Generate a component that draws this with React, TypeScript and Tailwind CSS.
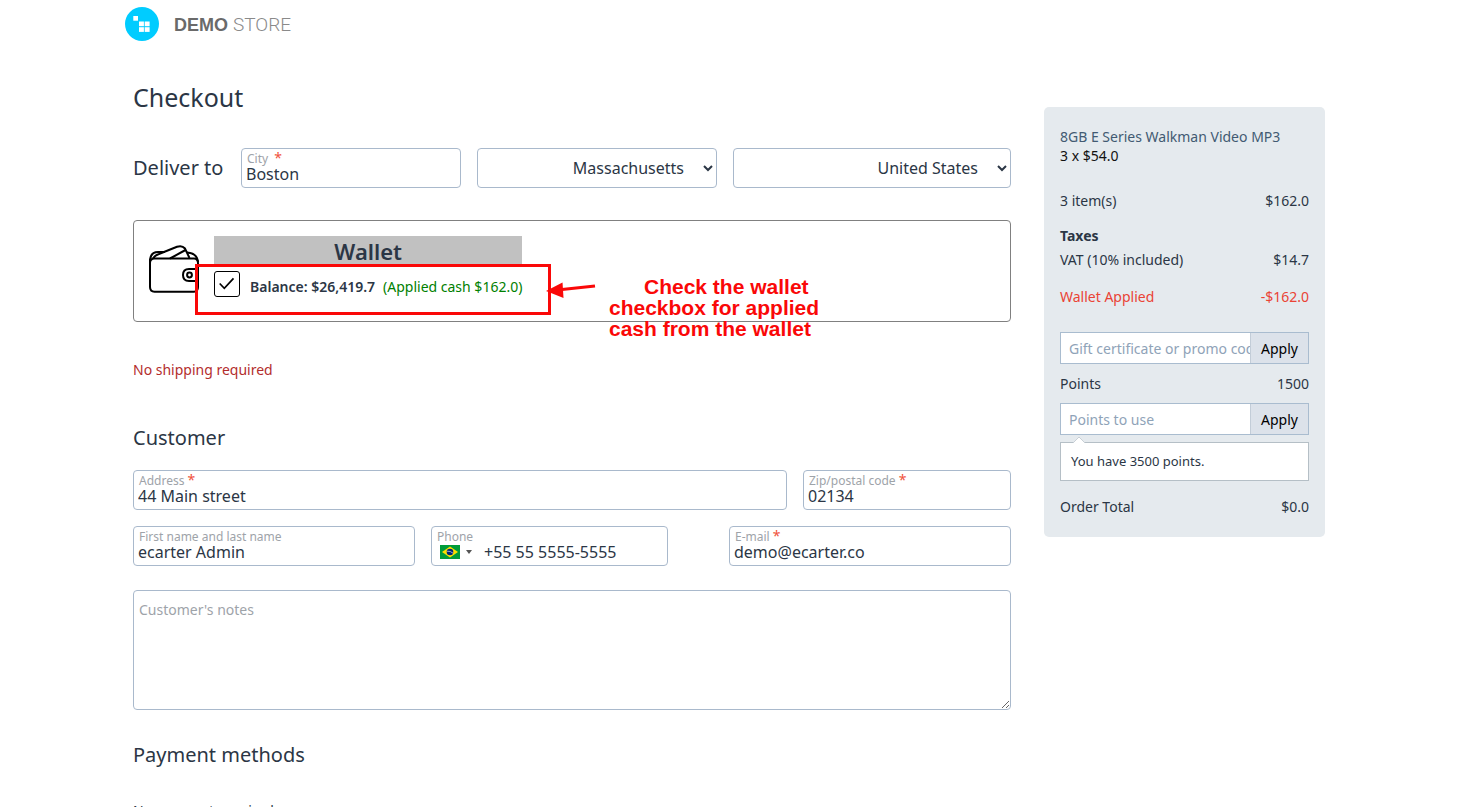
import { useId, useState } from "react";
import type { ReactNode } from "react";

const fieldBorder = "rounded border border-[#a9b9cc] bg-white";

function FloatingField({
  label,
  value,
  required = false,
  type = "text",
  className = "",
  wideMark = false,
}: {
  label: string;
  value: string;
  required?: boolean;
  type?: string;
  className?: string;
  wideMark?: boolean;
}) {
  const id = useId();
  return (
    <div className={`relative ${className}`}>
      <label htmlFor={id} className="absolute top-[3px] left-1.5 text-xs leading-4 text-[#9ea3a9]">
        {label}
        {required && (
          <span className={`text-sm leading-none text-[#f0523d] ${wideMark ? "ml-1.5" : "ml-[3px]"}`}>*</span>
        )}
      </label>
      <input
        id={id}
        type={type}
        defaultValue={value}
        className={`h-10 w-full pt-3 pl-1 text-base leading-5 outline-none ${fieldBorder}`}
      />
    </div>
  );
}

function SectionTitle({ children, className = "" }: { children: ReactNode; className?: string }) {
  return <h2 className={`text-xl leading-7 ${className}`}>{children}</h2>;
}

function SummaryRow({ label, value, className = "" }: { label: string; value: string; className?: string }) {
  return (
    <div className={`flex justify-between ${className}`}>
      <span>{label}</span>
      <span>{value}</span>
    </div>
  );
}

function CodeForm({ placeholder, className = "" }: { placeholder: string; className?: string }) {
  return (
    <form className={`flex h-8 border border-[#a9bccf] bg-white ${className}`} onSubmit={(e) => e.preventDefault()}>
      <input
        aria-label={placeholder}
        placeholder={placeholder}
        className="min-w-0 flex-1 pt-0.5 pl-2 text-sm outline-none placeholder:text-[#8fa3b8]"
      />
      <button type="submit" className="w-[58px] border-l border-[#c3cdd8] bg-[#dce2ea] pt-0.5 text-sm text-black">
        Apply
      </button>
    </form>
  );
}

function StoreLogo() {
  return (
    <svg viewBox="0 0 34 34" className="size-[34px]" aria-hidden="true">
      <circle cx="17" cy="17" r="17" fill="#00ccff" />
      <g fill="#fff">
        <rect x="8.300" y="9" width="4.700" height="4.700" />
        <rect x="14" y="14.500" width="4.900" height="4.700" />
        <rect x="19.700" y="14.500" width="4.900" height="4.700" />
        <rect x="14" y="20.200" width="4.900" height="4.700" />
        <rect x="19.700" y="20.200" width="4.900" height="4.700" />
      </g>
    </svg>
  );
}

function WalletIcon() {
  return (
    <svg viewBox="0 0 52 50" className="h-[50px] w-[52px]" fill="none" stroke="#000" strokeWidth="2" aria-hidden="true">
      <path d="M50 25V19Q50 14.500 46 14.500H6.500Q2 14.500 2 19V43Q2 47.700 6.500 47.700H46Q50 47.700 50 43V37" />
      <path d="M2 20V15.500Q3 8 10 8H17" />
      <path d="M5 14.500Q7 11 11 10L29 2.800Q34 1 37 4.500L41.500 14" />
      <path d="M22 14.500L37.500 6" />
      <path d="M39 8.500Q49 9 50 18" />
      <path d="M50 25H41Q35 25 35 31Q35 37 41 37H50Z" />
      <circle cx="41.500" cy="31" r="2.400" />
    </svg>
  );
}

function BrazilFlag() {
  return (
    <svg viewBox="0 0 20 14" className="h-3.5 w-5" aria-hidden="true">
      <rect width="20" height="14" fill="#009b3a" />
      <path d="M10 1.500L18 7L10 12.500L2 7Z" fill="#fedf00" />
      <circle cx="10" cy="7" r="3.300" fill="#002776" />
      <path d="M7 6.200Q10.500 5.800 13 8.200" stroke="#fff" strokeWidth=".6" fill="none" />
    </svg>
  );
}

function WalletCard() {
  const [checked, setChecked] = useState(true);
  return (
    <section className="relative mt-8 flex rounded border border-[#808080] py-[15px] pl-[14px]">
      <div className="mt-2">
        <WalletIcon />
      </div>
      <div className="ml-3.5 h-[70px]">
        <h3 className="bg-[#c1c1c1] text-center text-[22px] leading-[30px] font-semibold">Wallet</h3>
        <div className="mt-[5px] flex items-center">
          <span className="relative flex">
            <input
              id="wallet"
              type="checkbox"
              checked={checked}
              onChange={(e) => setChecked(e.target.checked)}
              className="size-[26px] appearance-none rounded-[3px] border border-black bg-white"
            />
            {checked && (
              <svg
                viewBox="0 0 26 26"
                className="pointer-events-none absolute inset-0 size-[26px]"
                fill="none"
                stroke="#000"
                strokeWidth="1.700"
                aria-hidden="true"
              >
                <path d="M5.700 12.500L10.300 17.300L19.500 7.300" />
              </svg>
            )}
          </span>
          <label htmlFor="wallet" className="mt-1.5 ml-2.5 text-sm leading-5">
            <span className="font-semibold">Balance: $26,419.7</span>
            <span className="ml-2 text-[#008000]">(Applied cash $162.0)</span>
          </label>
        </div>
      </div>
      <div className="pointer-events-none absolute top-[43px] left-[61px] h-[51px] w-[356px] border-3 border-[#fa0808]" />
      <svg viewBox="0 0 52 24" className="pointer-events-none absolute top-[58px] left-[412px] h-6 w-[52px]" aria-hidden="true">
        <path d="M49 7L16 10.500" stroke="#fa0808" strokeWidth="3" />
        <path d="M0 12L16.500 3.500L17.500 19Z" fill="#fa0808" />
      </svg>
      <p className="pointer-events-none absolute top-[55px] left-[475px] w-[230px] indent-[35px] font-['Liberation_Sans',Arial,sans-serif] text-[21px] leading-[21px] font-bold text-[#fa0808]">
        Check the wallet
        <br />
        <span className="block indent-0">checkbox for applied cash from the wallet</span>
      </p>
    </section>
  );
}

function OrderSummary() {
  return (
    <aside className="mt-[59px] w-[281px] shrink-0 self-start rounded-[5px] bg-[#e5eaee] px-4 py-5 text-sm leading-5">
      <div className="leading-[19px]">
        <a href="#product" className="block text-[#425a72]">
          8GB E Series Walkman Video MP3
        </a>
        <p className="text-[#111]">3 x $54.0</p>
      </div>
      <SummaryRow className="mt-[26px]" label="3 item(s)" value="$162.0" />
      <h3 className="mt-[15px] font-bold">Taxes</h3>
      <SummaryRow className="mt-1" label="VAT (10% included)" value="$14.7" />
      <SummaryRow className="mt-[17px] text-[#ea4335]" label="Wallet Applied" value="-$162.0" />
      <CodeForm className="mt-[25px]" placeholder="Gift certificate or promo code" />
      <SummaryRow className="mt-2.5" label="Points" value="1500" />
      <CodeForm className="mt-[9px]" placeholder="Points to use" />
      <div className="relative mt-[7px] border border-[#b5bfc6] bg-white px-2.5 py-[9px] text-[13px] leading-[19px]">
        <svg viewBox="0 0 14 8" className="absolute -top-[7px] left-[11px] h-2 w-3.5" aria-hidden="true">
          <path d="M0 8L7 1L14 8Z" fill="#fff" />
          <path d="M1 7L7 1L13 7" fill="none" stroke="#c9d0d6" />
        </svg>
        You have 3500 points.
      </div>
      <SummaryRow className="mt-4" label="Order Total" value="$0.0" />
    </aside>
  );
}

export default function App() {
  return (
    <div className="h-screen overflow-y-auto bg-white pr-3 font-['Noto_Sans',sans-serif] text-[#2b3645] [scrollbar-width:none]">
      <div className="mx-auto max-w-[1192px] pb-12">
        <header className="-ml-2 flex h-12 items-center">
          <a href="#home" className="flex items-center gap-[15px]">
            <StoreLogo />
            <span className="flex items-baseline gap-[5px] pt-0.5 text-lg">
              <b className="font-['Liberation_Sans',Arial,sans-serif] text-[#6a6a6a]">DEMO</b>
              <span className="font-['Roboto',sans-serif] text-[19px] font-light text-[#8a8a8a]">STORE</span>
            </span>
          </a>
        </header>
        <div className="flex gap-[33px]">
          <main className="min-w-0 flex-1">
            <h1 className="mt-[31px] text-[25px] leading-9">Checkout</h1>

            <div className="mt-[33px] flex items-center gap-4">
              <SectionTitle className="w-[92px] shrink-0 whitespace-nowrap">Deliver to</SectionTitle>
              <FloatingField label="City" value="Boston" required wideMark className="w-[220px]" />
              <select
                aria-label="State"
                className={`h-10 w-[240px] pr-4 text-right text-base [text-align-last:right] ${fieldBorder}`}
              >
                <option>Massachusetts</option>
              </select>
              <select
                aria-label="Country"
                className={`h-10 min-w-0 flex-1 pr-4 text-right text-base [text-align-last:right] ${fieldBorder}`}
              >
                <option>United States</option>
              </select>
            </div>

            <WalletCard />

            <p className="mt-[38px] text-sm leading-5 text-[#b32d2d]">No shipping required</p>

            <SectionTitle className="mt-11">Customer</SectionTitle>
            <div className="mt-[18px] flex gap-4">
              <FloatingField label="Address" value="44 Main street" required className="flex-1" />
              <FloatingField label="Zip/postal code" value="02134" required className="w-52" />
            </div>
            <div className="mt-4 grid grid-cols-3 gap-4">
              <FloatingField label="First name and last name" value="ecarter Admin" />
              <div className={`relative flex h-10 w-[237px] items-end ${fieldBorder}`}>
                <label htmlFor="phone" className="absolute top-0.5 left-[5px] text-xs leading-4 text-[#9ea3a9]">
                  Phone
                </label>
                <button type="button" aria-label="Phone country" className="mb-1.5 ml-2 flex items-center gap-1.5">
                  <BrazilFlag />
                  <svg viewBox="0 0 6 4" className="h-1 w-1.5" aria-hidden="true">
                    <path d="M0 0H6L3 4Z" fill="#555" />
                  </svg>
                </button>
                <input
                  id="phone"
                  type="tel"
                  defaultValue="+55 55 5555-5555"
                  className="ml-3 h-[26px] min-w-0 flex-1 text-base leading-5 outline-none"
                />
              </div>
              <FloatingField label="E-mail" value="demo@ecarter.co" type="email" required />
            </div>
            <textarea
              aria-label="Customer's notes"
              placeholder="Customer's notes"
              className={`mt-6 block h-[120px] w-full resize px-[5px] py-2 text-sm leading-[22px] outline-none placeholder:text-[#9ea3a9] ${fieldBorder}`}
            />

            <SectionTitle className="mt-[31px]">Payment methods</SectionTitle>
            <p className="mt-8 text-sm leading-5">No payment required</p>
          </main>
          <OrderSummary />
        </div>
      </div>
    </div>
  );
}
